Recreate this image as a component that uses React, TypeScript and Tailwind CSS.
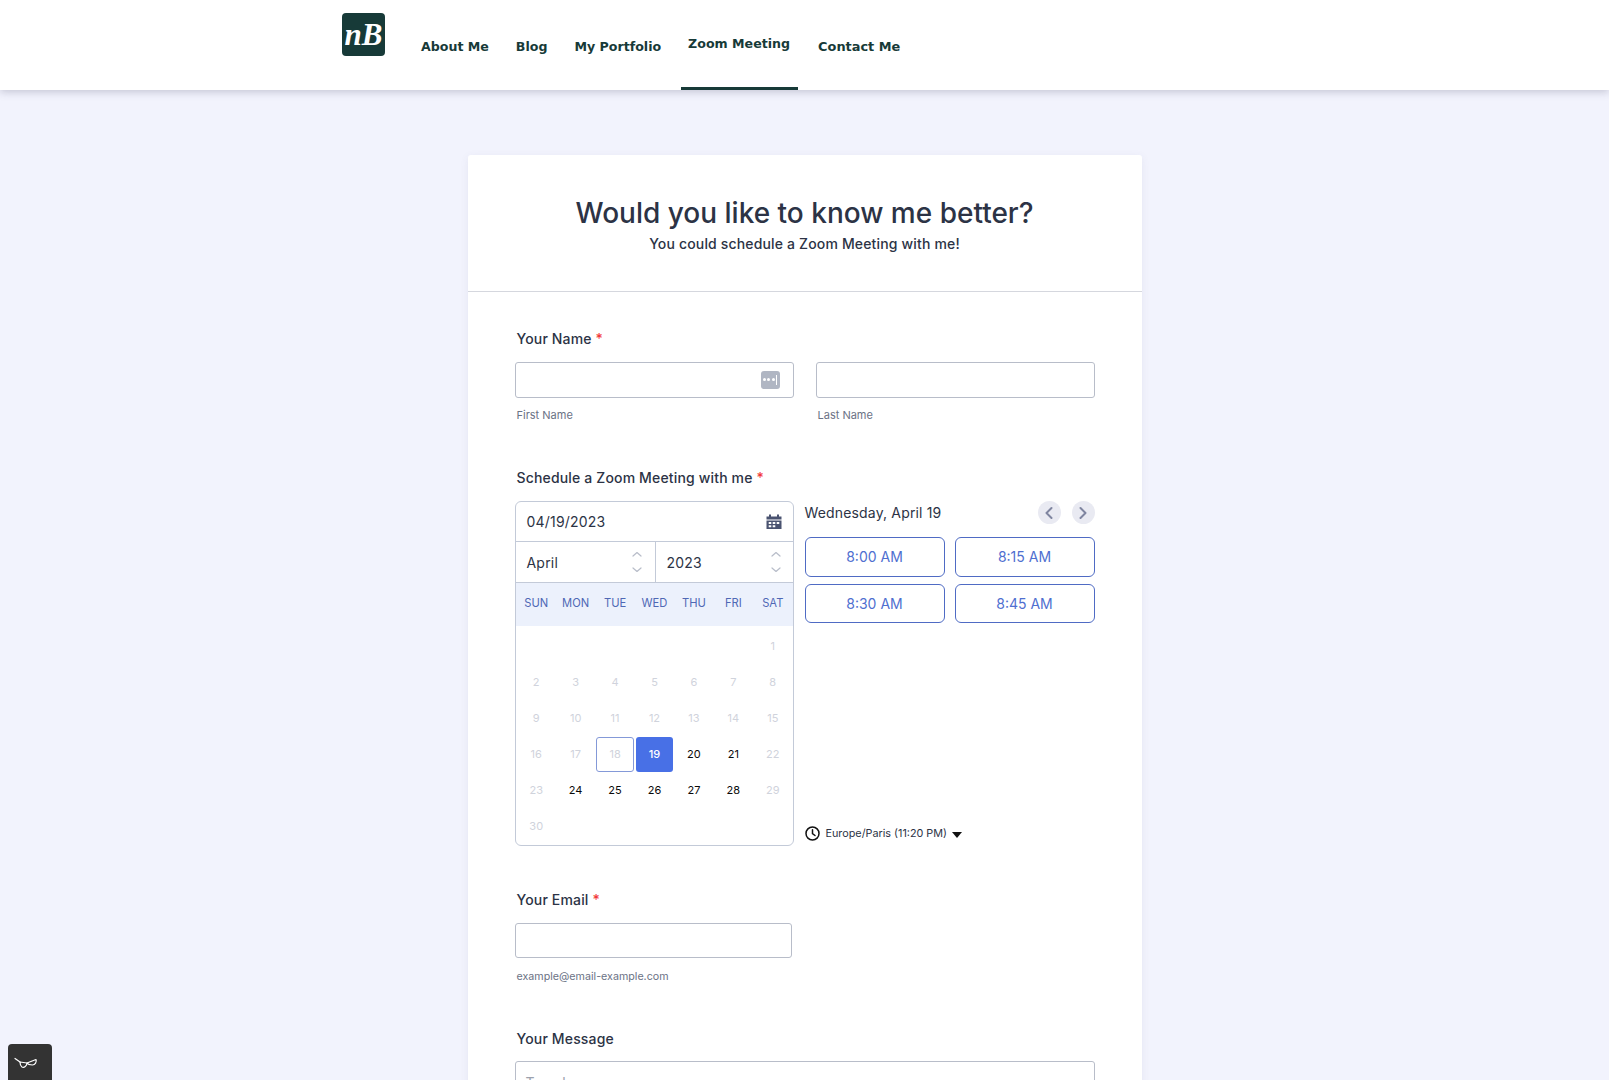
import React from 'react'

const navItems = ['About Me', 'Blog', 'My Portfolio', 'Zoom Meeting', 'Contact Me']
const weekDays = ['SUN', 'MON', 'TUE', 'WED', 'THU', 'FRI', 'SAT']
const activeDays = [20, 21, 24, 25, 26, 27, 28]
const slots = ['8:00 AM', '8:15 AM', '8:30 AM', '8:45 AM']

function FieldLabel({ text, required }: { text: string; required?: boolean }) {
  return (
    <div className="ml-[2px] mb-[12.5px] h-5 text-[14px] leading-5 font-[450] tracking-[0.16px] text-[#2c3345]">
      {text}
      {required && <span className="text-[#f23a3c]"> *</span>}
    </div>
  )
}

function Spinner() {
  return (
    <svg width="12" height="22" viewBox="0 0 12 22" fill="none" stroke="#b8bdc9" strokeWidth="1.2" strokeLinecap="round" strokeLinejoin="round">
      <path d="M2 5 L6 1.5 L10 5" />
      <path d="M2 17 L6 20.5 L10 17" />
    </svg>
  )
}

function CalendarBox() {
  const cells: (number | null)[] = [null, null, null, null, null, null]
  for (let i = 1; i <= 30; i++) cells.push(i)

  return (
    <div className="w-[279px] h-[345px] shrink-0 border border-[#c3cad8] rounded-[6px] overflow-hidden">
      <div className="h-[40px] border-b border-[#c3cad8] flex items-center justify-between pl-[11px] pr-[11px] text-[14px] text-[#2c3345]">
        <span className="tracking-[0.2px]">04/19/2023</span>
        <svg width="16" height="16" viewBox="0 0 16 16" fill="#4a5370">
          <rect x="3" y="0.5" width="2" height="2.5" />
          <rect x="11" y="0.5" width="2" height="2.5" />
          <path d="M0.5 2.5h15v3H0.5z" />
          <path fillRule="evenodd" d="M0.5 6.5h15v8.5H0.5z M2.7 8v2h2.6V8z M6.7 8v2h2.6V8z M10.7 8v2h2.6V8z M2.7 11.3v2h2.6v-2z M6.7 11.3v2h2.6v-2z" />
        </svg>
      </div>
      <div className="h-[41px] border-b border-[#c3cad8] flex text-[14px] text-[#2c3345]">
        <div className="w-[140px] border-r border-[#c3cad8] flex items-center justify-between pl-[11px] pr-[12px]">
          <span className="tracking-[0.2px]">April</span>
          <Spinner />
        </div>
        <div className="flex-1 flex items-center justify-between pl-[11px] pr-[11px]">
          <span className="tracking-[0.2px]">2023</span>
          <Spinner />
        </div>
      </div>
      <div className="h-[43px] pl-px bg-[#ecf1fc] grid grid-cols-7 items-start pt-[12px] text-[11.2px] leading-4 text-[#4f68b5] text-center">
        {weekDays.map((d) => (
          <span key={d}>{d}</span>
        ))}
      </div>
      <div className="grid grid-cols-7 auto-rows-[36px] pt-[2px] pl-px text-[11px] text-center">
        {cells.map((day, i) => {
          if (day === null) return <span key={i} />
          if (day === 19)
            return (
              <span key={i} className="flex items-center justify-center mx-[1px] my-[0.5px] rounded-[3px] bg-[#4870e6] text-white font-medium">
                {day}
              </span>
            )
          if (day === 18)
            return (
              <span key={i} className="flex items-center justify-center mx-[1px] my-[0.5px] rounded-[3px] border border-[#8499d8] text-[#d0d3dc]">
                {day}
              </span>
            )
          return (
            <span key={i} className={`flex items-center justify-center ${activeDays.includes(day) ? 'text-[#0a0a0a]' : 'text-[#d0d3dc]'}`}>
              {day}
            </span>
          )
        })}
      </div>
    </div>
  )
}

export default function App() {
  return (
    <div className="min-h-screen bg-[#f2f3fd] font-['Inter',sans-serif]">
      {/* HEADER */}
      <header className="relative h-[90px] bg-white shadow-[0_2px_8px_rgba(60,60,90,0.25)] pl-[342px] flex">
        <div className="mt-[13px] w-[43px] h-[43px] rounded-[4px] bg-[#173a38] flex items-center justify-center text-white font-['Liberation_Serif',serif] italic font-bold text-[31px] leading-none">
          nB
        </div>
        <nav className="ml-[29px] flex gap-[13px] font-['DejaVu_Sans',sans-serif] font-bold text-[12.6px] text-[#173a38]">
          {navItems.map((item) => {
            const active = item === 'Zoom Meeting'
            return (
              <a
                key={item}
                className={`h-[90px] px-[7px] flex items-center ${active ? 'border-b-[3px] border-[#173a38] pt-[2px] w-[117px]' : 'pt-[4px]'} ${item === 'Contact Me' ? 'text-[12.9px]' : ''}`}
              >
                {item}
              </a>
            )
          })}
        </nav>
      </header>

      {/* FORM CARD */}
      <main className="pt-[65px] flex justify-center">
        <div className="w-[674px] bg-white rounded-[3px] shadow-[0_2px_8px_rgba(80,80,120,0.08)]">
          <div className="h-[137px] border-b border-[#d5d7de] pt-[37px] text-center text-[#2c3345]">
            <h1 className="font-medium text-[28px] leading-[42px]">Would you like to know me better?</h1>
            <p className="text-[14px] leading-5 font-[450] tracking-[0.16px]">You could schedule a Zoom Meeting with me!</p>
          </div>

          <div className="px-[47px] pt-[37px] pb-10">
            {/* NAME */}
            <FieldLabel text="Your Name" required />
            <div className="flex gap-[22px]">
              <div className="flex-1">
                <div className="h-[36px] border border-[#b8bdc9] rounded-[3px] flex items-center justify-end pr-[13px]">
                  <div className="w-[19px] h-[18px] rounded-[3px] bg-[#b0b6c3] flex items-center justify-center gap-[1.5px]">
                    <span className="w-[3px] h-[3px] rounded-full bg-white" />
                    <span className="w-[3px] h-[3px] rounded-full bg-white" />
                    <span className="w-[3px] h-[3px] rounded-full bg-white" />
                    <span className="w-px h-[10px] bg-white" />
                  </div>
                </div>
                <div className="ml-[2px] mt-[9px] text-[11px] leading-4 text-[#6b7285]">First Name</div>
              </div>
              <div className="flex-1">
                <div className="h-[36px] border border-[#b8bdc9] rounded-[3px]" />
                <div className="ml-[2px] mt-[9px] text-[11px] leading-4 text-[#6b7285]">Last Name</div>
              </div>
            </div>

            {/* SCHEDULE */}
            <div className="mt-[45px]">
              <FieldLabel text="Schedule a Zoom Meeting with me" required />
              <div className="mt-[13.5px] flex gap-[11px]">
                <CalendarBox />
                <div className="flex-1 flex flex-col">
                  <div className="h-[23px] flex items-center justify-between text-[14px] tracking-[0.16px] text-[#2c3345]">
                    <span>Wednesday, April 19</span>
                    <div className="flex gap-[11px]">
                      <button className="w-[23px] h-[23px] rounded-full bg-[#e9eaf2] flex items-center justify-center">
                        <svg width="10" height="14" viewBox="0 0 10 14" fill="none" stroke="#7f85a0" strokeWidth="2" strokeLinecap="round" strokeLinejoin="round">
                          <path d="M7.5 2 L2.5 7 L7.5 12" />
                        </svg>
                      </button>
                      <button className="w-[23px] h-[23px] rounded-full bg-[#e9eaf2] flex items-center justify-center">
                        <svg width="10" height="14" viewBox="0 0 10 14" fill="none" stroke="#7f85a0" strokeWidth="2" strokeLinecap="round" strokeLinejoin="round">
                          <path d="M2.5 2 L7.5 7 L2.5 12" />
                        </svg>
                      </button>
                    </div>
                  </div>
                  <div className="mt-[13px] grid grid-cols-2 gap-x-[10px] gap-y-[7px]">
                    {slots.map((s) => (
                      <button key={s} className="h-[39.5px] border border-[#4f6bc4] rounded-[6px] text-[14px] text-[#4f6fd0]">
                        {s}
                      </button>
                    ))}
                  </div>
                  <div className="mt-auto mb-[4px] flex items-center text-[10.8px] text-[#2c3345]">
                    <svg width="15" height="15" viewBox="0 0 15 15" fill="none" stroke="#111" strokeWidth="1.5" strokeLinecap="round">
                      <circle cx="7.5" cy="7.5" r="6.5" />
                      <path d="M7.5 3.8 V7.7 L10 9.5" />
                    </svg>
                    <span className="ml-[6px]">Europe/Paris (11:20 PM)</span>
                    <span className="ml-[5px] mt-[3px] w-0 h-0 border-x-[5px] border-x-transparent border-t-[6px] border-t-[#111]" />
                  </div>
                </div>
              </div>
            </div>

            {/* EMAIL */}
            <div className="mt-[44px]">
              <FieldLabel text="Your Email" required />
              <div className="w-[277px] h-[35px] border border-[#b8bdc9] rounded-[3px]" />
              <div className="ml-[2px] mt-[11px] text-[10.7px] leading-4 text-[#6b7285]">example@email-example.com</div>
            </div>

            {/* MESSAGE */}
            <div className="mt-[44px]">
              <FieldLabel text="Your Message" />
              <textarea
                placeholder="Type here..."
                className="block w-full h-[120px] border border-[#b8bdc9] rounded-[3px] px-[10px] py-[10px] text-[14px] placeholder:text-[#9ca1ad]"
              />
            </div>
          </div>
        </div>
      </main>

      {/* ACCESSIBILITY WIDGET */}
      <div className="fixed left-[8px] bottom-0 w-[44px] h-[36px] bg-[#333333] rounded-t-[4px] pl-[6px] pt-[13px]">
        <svg width="24" height="12" viewBox="0 0 24 12" fill="none" stroke="#fff" strokeWidth="1.2" strokeLinecap="round" strokeLinejoin="round">
          <path d="M1 1.5 L6 5" />
          <path d="M6 5 L13 6 C13 9 10 11 8 10 C6.5 9 6 7 6 5" />
          <path d="M13 6 L22 2.5 C23 5 21 8 18.5 8 C16 8 14 7.5 13 6" />
        </svg>
      </div>
    </div>
  )
}
